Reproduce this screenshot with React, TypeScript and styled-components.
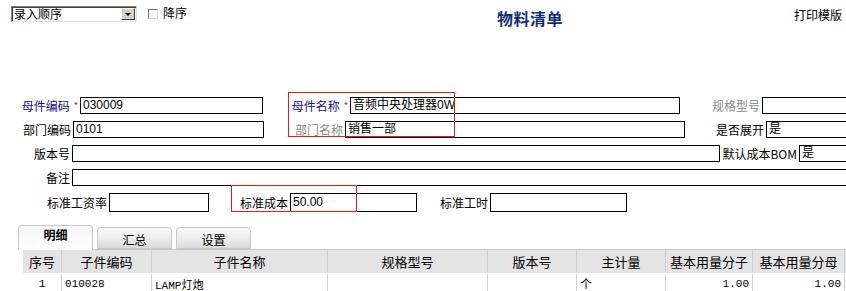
import React from "react";
import styled, { createGlobalStyle } from "styled-components";

const GlobalStyle = createGlobalStyle`
  html, body {
    margin: 0;
    padding: 0;
    background: #ffffff;
    overflow: hidden;
  }
  body {
    font-family: "Noto Sans CJK SC", "Liberation Sans", sans-serif;
    font-size: 12px;
    color: #000;
  }
`;

const Page = styled.div`
  position: relative;
  width: 846px;
  height: 291px;
  overflow: hidden;
`;

// top bar
const TopBar = styled.div`
  display: flex;
  align-items: flex-start;
  height: 30px;
  padding-top: 6px;
  box-sizing: border-box;
`;

const SelectBox = styled.div`
  margin-left: 11px;
  width: 126px;
  height: 16px;
  box-sizing: border-box;
  border: 1px solid;
  border-color: #808080 #e0e0e0 #e0e0e0 #808080;
  box-shadow: inset 1px 1px 0 #404040;
  display: flex;
  align-items: center;
  justify-content: space-between;
  font-size: 12px;
  line-height: 14px;
  padding-left: 2px;
`;

const SelectArrow = styled.div`
  width: 14px;
  height: 12px;
  margin-right: 1px;
  background: #d4d0c8;
  border: 1px solid;
  border-color: #ffffff #404040 #404040 #ffffff;
  box-sizing: border-box;
  display: flex;
  align-items: center;
  justify-content: center;

  &::after {
    content: "";
    border-left: 3px solid transparent;
    border-right: 3px solid transparent;
    border-top: 3px solid #000;
  }
`;

const CheckBox = styled.div`
  margin-left: 11px;
  margin-top: 3px;
  width: 10px;
  height: 10px;
  box-sizing: border-box;
  border: 1px solid;
  border-color: #6f6f6f #d8d8d8 #d8d8d8 #6f6f6f;
  background: #fff;
`;

const CheckLabel = styled.span`
  margin-left: 5px;
  font-size: 12px;
  line-height: 14px;
`;

const Title = styled.div`
  margin-left: 310px;
  margin-top: 3px;
  font-size: 16px;
  line-height: 18px;
  font-weight: bold;
  color: #0d2d78;
  letter-spacing: 0.5px;
`;

const PrintLink = styled.div`
  margin-left: auto;
  margin-right: 4px;
  margin-top: 2px;
  font-size: 12px;
  line-height: 14px;
`;

// form
const Form = styled.div`
  margin-top: 67px;
  display: flex;
  flex-direction: column;
  gap: 7px;
`;

const Row = styled.div`
  display: flex;
  align-items: center;
`;

const Label = styled.div<{ $w: number; $tone?: "blue" | "gray" }>`
  width: ${(p) => p.$w}px;
  flex: none;
  text-align: right;
  padding-right: 2px;
  box-sizing: border-box;
  white-space: nowrap;
  font-size: 12px;
  line-height: 14px;
  color: ${(p) =>
    p.$tone === "blue" ? "#11117f" : p.$tone === "gray" ? "#8a8a8a" : "#000"};
`;

const Star = styled.span`
  font-size: 9px;
  color: #444;
  margin-left: 4px;
  vertical-align: top;
`;

const Input = styled.div<{ $w: number; $h?: number }>`
  width: ${(p) => p.$w}px;
  height: ${(p) => p.$h ?? 17}px;
  flex: none;
  box-sizing: border-box;
  border: 1px solid #000;
  padding-left: 2px;
  font-size: 12px;
  line-height: ${(p) => (p.$h ?? 17) - 2}px;
  white-space: nowrap;
  overflow: hidden;
  font-family: "Liberation Sans", "Noto Sans CJK SC", sans-serif;
`;

const Mark = styled.div<{ $x: number; $y: number; $w: number; $h: number }>`
  position: absolute;
  left: ${(p) => p.$x}px;
  top: ${(p) => p.$y}px;
  width: ${(p) => p.$w}px;
  height: ${(p) => p.$h}px;
  border: 1px solid #e41b1b;
  box-sizing: border-box;
  pointer-events: none;
`;

// tabs
const TabBar = styled.div`
  margin-top: 13px;
  padding-left: 18px;
  display: flex;
  align-items: flex-end;
  gap: 4px;
  height: 24px;
  position: relative;
  z-index: 1;
`;

const Tab = styled.div<{ $active?: boolean }>`
  width: 75px;
  height: ${(p) => (p.$active ? 25 : 22)}px;
  margin-bottom: ${(p) => (p.$active ? -1 : 0)}px;
  box-sizing: border-box;
  border: 1px solid #c8c8c8;
  border-bottom: ${(p) => (p.$active ? "none" : "1px solid #c8c8c8")};
  border-radius: 4px 4px 0 0;
  background: ${(p) =>
    p.$active
      ? "linear-gradient(#f7f7f7, #ffffff)"
      : "linear-gradient(#f9f9f9 0%, #eeeeee 50%, #dadada 100%)"};
  text-align: center;
  font-size: 12px;
  font-weight: ${(p) => (p.$active ? "bold" : "normal")};
  line-height: ${(p) => (p.$active ? 18 : 24)}px;
`;

// table
const Table = styled.div`
  margin-left: 23px;
  border-top: 1px solid #c8c8c8;
  width: 840px;
`;

const TableRow = styled.div<{ $head?: boolean }>`
  display: flex;
  height: ${(p) => (p.$head ? 23 : 19)}px;
  background: ${(p) => (p.$head ? "#e4e4e4" : "#fff")};
  border-bottom: ${(p) => (p.$head ? "1px solid #ffffff" : "none")};
`;

const Cell = styled.div<{ $w: number; $align?: string; $mono?: boolean }>`
  width: ${(p) => p.$w}px;
  flex: none;
  box-sizing: border-box;
  border-right: 1px solid #d0d0d0;
  padding: 0 3px;
  text-align: ${(p) => p.$align ?? "left"};
  display: flex;
  align-items: center;
  justify-content: ${(p) =>
    p.$align === "center" ? "center" : p.$align === "right" ? "flex-end" : "flex-start"};
  font-size: ${(p) => (p.$mono ? 11 : 12)}px;
  font-family: ${(p) =>
    p.$mono
      ? `"Liberation Mono", "Noto Sans CJK SC", monospace`
      : `"Noto Sans CJK SC", "Liberation Sans", sans-serif`};
  white-space: nowrap;
  overflow: hidden;
`;

const HeadCell = styled(Cell)`
  font-size: 13px;
`;

const columns = [
  { title: "序号", w: 39 },
  { title: "子件编码", w: 90 },
  { title: "子件名称", w: 176 },
  { title: "规格型号", w: 160 },
  { title: "版本号", w: 89 },
  { title: "主计量", w: 89 },
  { title: "基本用量分子", w: 87 },
  { title: "基本用量分母", w: 92 },
];

const rowData = [
  { v: "1", align: "center", mono: true },
  { v: "010028", align: "left", mono: true },
  { v: "LAMP灯炮", align: "left", mono: true },
  { v: "", align: "left" },
  { v: "", align: "left" },
  { v: "个", align: "left" },
  { v: "1.00", align: "right", mono: true },
  { v: "1.00", align: "right", mono: true },
];

const App = () => {
  return (
    <Page>
      <GlobalStyle />
      <TopBar>
        <SelectBox>
          <span>录入顺序</span>
          <SelectArrow />
        </SelectBox>
        <CheckBox />
        <CheckLabel>降序</CheckLabel>
        <Title>物料清单</Title>
        <PrintLink>打印模版</PrintLink>
      </TopBar>

      <Form>
        <Row>
          <Label $w={80} $tone="blue">
            母件编码<Star>*</Star>
          </Label>
          <Input $w={183}>030009</Input>
          <Label $w={87} $tone="blue">
            母件名称<Star>*</Star>
          </Label>
          <Input $w={330}>音频中央处理器0W</Input>
          <Label $w={82} $tone="gray">
            规格型号
          </Label>
          <Input $w={100} />
        </Row>
        <Row>
          <Label $w={73}>部门编码</Label>
          <Input $w={191}>0101</Input>
          <Label $w={81} $tone="gray">
            部门名称
          </Label>
          <Input $w={340}>销售一部</Input>
          <Label $w={81}>是否展开</Label>
          <Input $w={100}>是</Input>
        </Row>
        <Row>
          <Label $w={72}>版本号</Label>
          <Input $w={648} />
          <Label $w={79}>默认成本BOM</Label>
          <Input $w={100}>是</Input>
        </Row>
        <Row>
          <Label $w={72}>备注</Label>
          <Input $w={800} />
        </Row>
        <Row>
          <Label $w={109}>标准工资率</Label>
          <Input $w={100} $h={19} />
          <Label $w={81}>标准成本</Label>
          <Input $w={127} $h={19}>
            50.00
          </Input>
          <Label $w={73}>标准工时</Label>
          <Input $w={137} $h={19} />
        </Row>
      </Form>

      <TabBar>
        <Tab $active>明细</Tab>
        <Tab>汇总</Tab>
        <Tab>设置</Tab>
      </TabBar>

      <Table>
        <TableRow $head>
          {columns.map((c) => (
            <HeadCell key={c.title} $w={c.w} $align="center">
              {c.title}
            </HeadCell>
          ))}
        </TableRow>
        <TableRow>
          {rowData.map((d, i) => (
            <Cell key={i} $w={columns[i].w} $align={d.align} $mono={d.mono}>
              {d.v}
            </Cell>
          ))}
        </TableRow>
      </Table>

      <Mark $x={288} $y={92} $w={167} $h={45} />
      <Mark $x={231} $y={185} $w={126} $h={27} />
    </Page>
  );
};

export default App;
